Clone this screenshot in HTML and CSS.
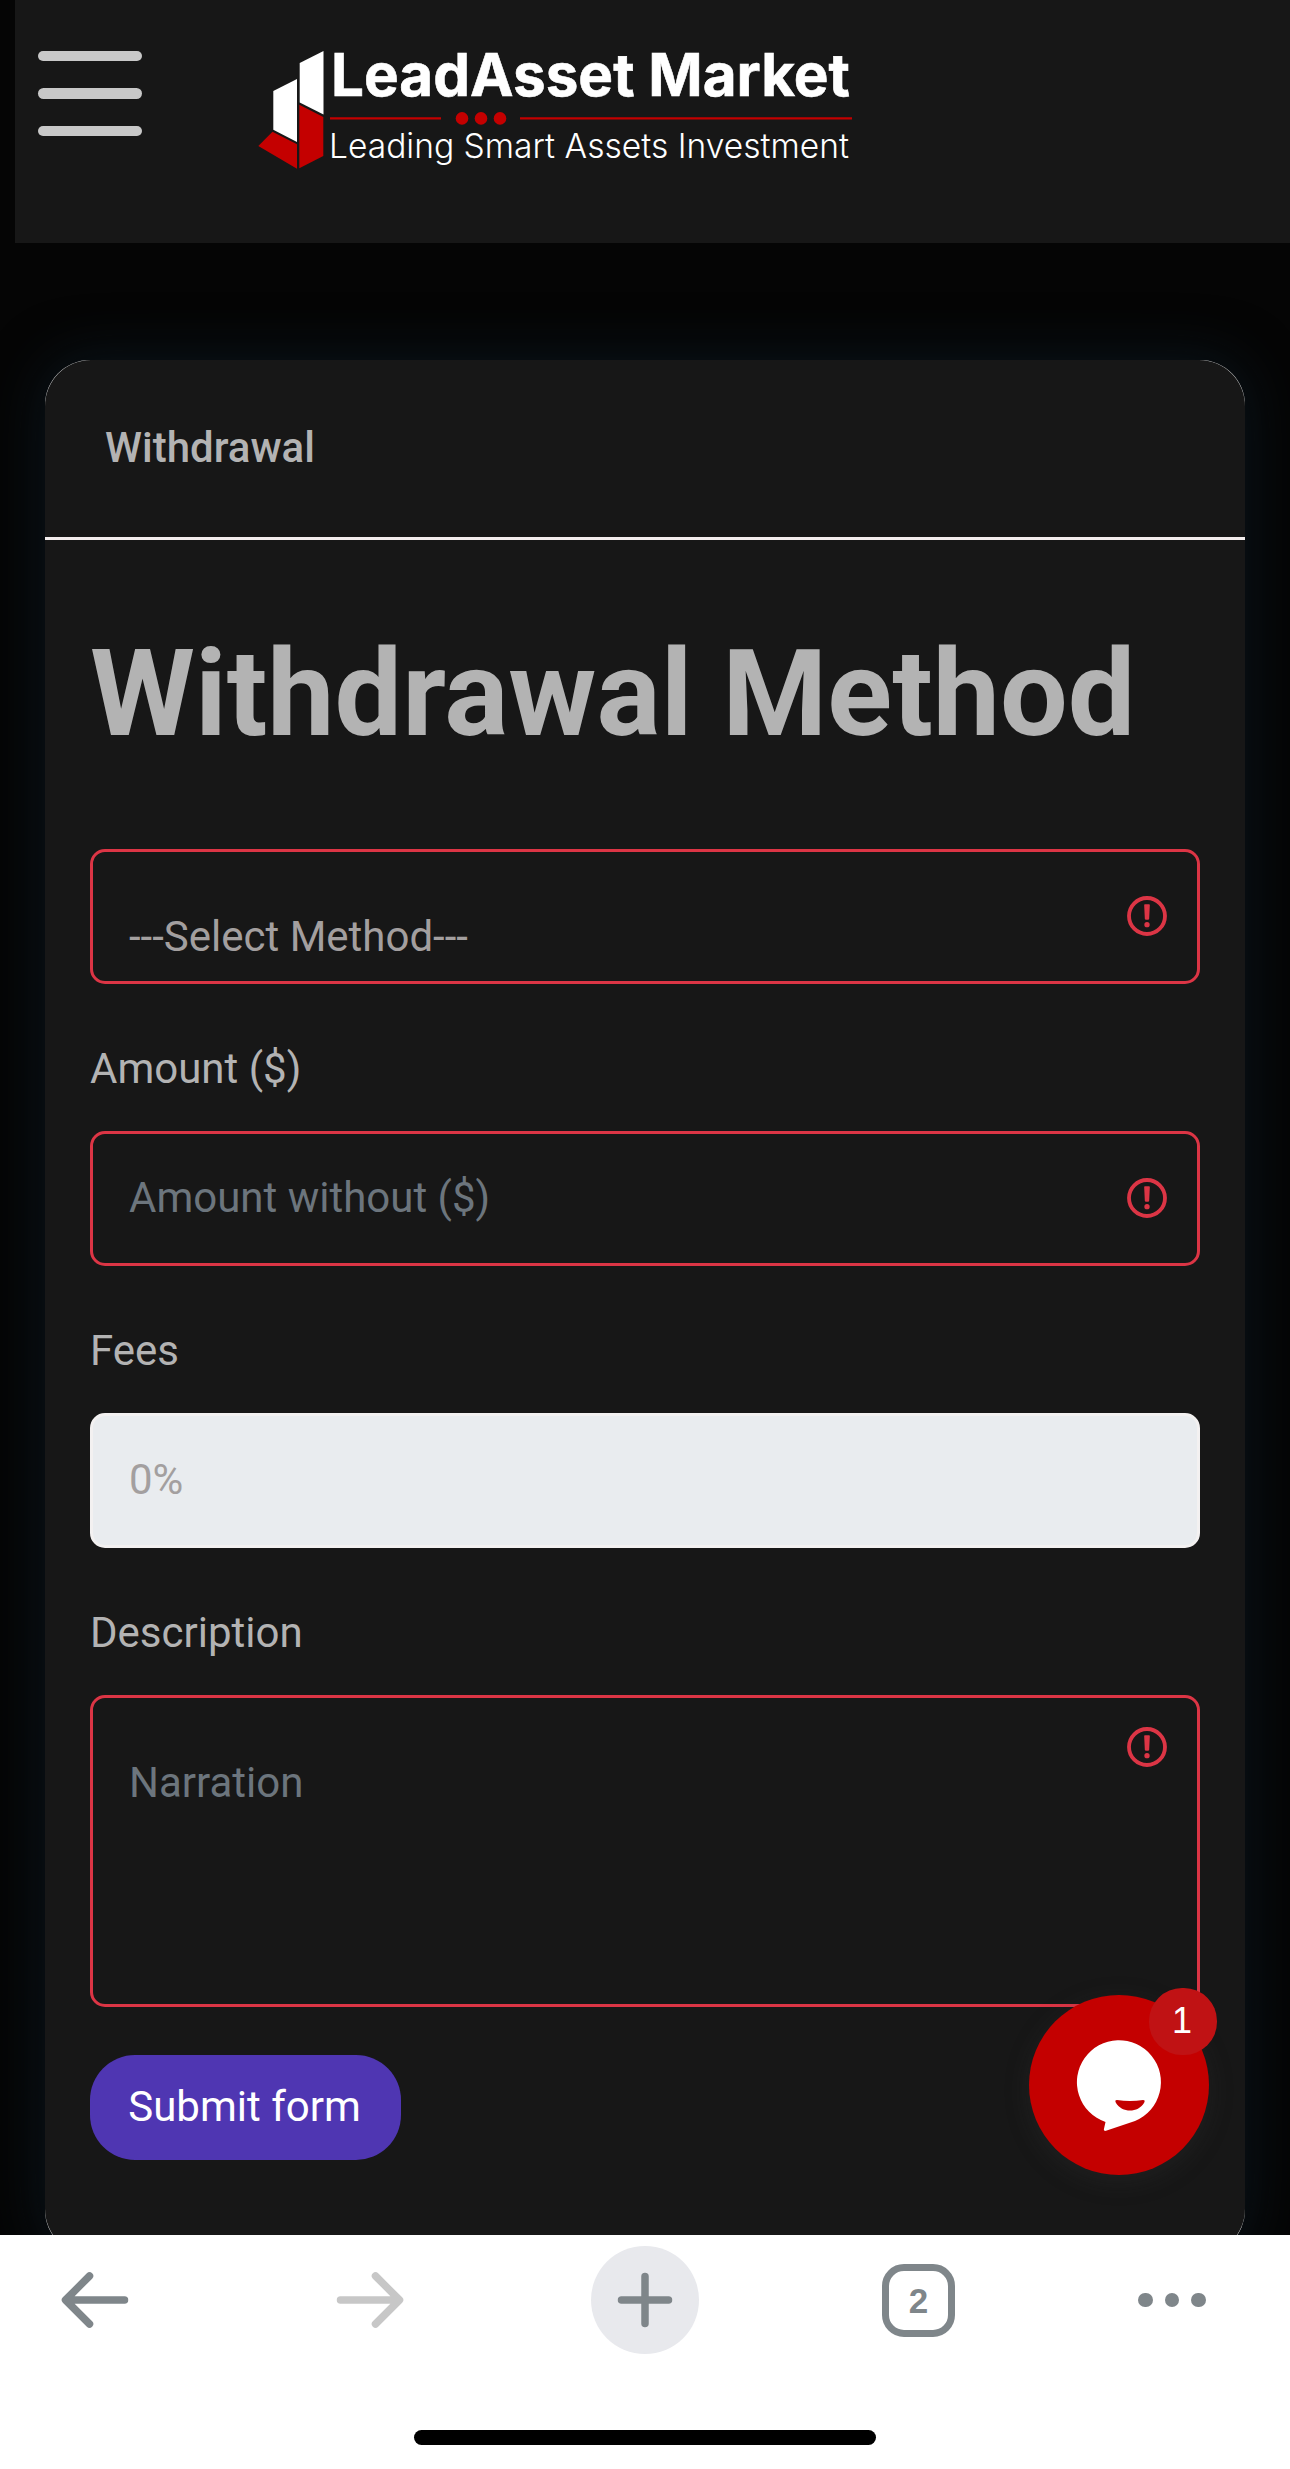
FILE: index.html
```
<!DOCTYPE html>
<html lang="en">

<head>
    <meta charset="UTF-8">
    <meta name="viewport" content="width=device-width, initial-scale=1.0">
    <title>Withdrawal</title>
    <link rel="stylesheet" href="styles.css">
</head>

<body>

    <div class="page">
        <header class="topbar">
            <button class="menu-btn" aria-label="Menu">
                <span></span>
                <span></span>
                <span></span>
            </button>
            <svg class="logo" viewBox="255 20 620 170" width="620" height="170">
                <polygon fill="#fff" points="299.7,63 323.5,51 323.5,114.5 299.7,102.5" />
                <polygon fill="#fff" points="273.3,91 297,79 297,142 273.3,129.7" />
                <polygon fill="#c40000" points="258.3,146 272.5,131.8 297,144.3 297,168.7" />
                <polygon fill="#c40000" points="299.3,104.7 323.3,117 323.3,156 299.3,168.3" />
                <text class="logo-name" x="331" y="96" textLength="519" lengthAdjust="spacingAndGlyphs">LeadAsset Market</text>
                <path stroke="#c40000" stroke-width="2.4" d="M330 118.4h111M520 118.4h332" />
                <circle fill="#c40000" cx="462" cy="118.4" r="6.3" />
                <circle fill="#c40000" cx="481" cy="118.4" r="6.3" />
                <circle fill="#c40000" cx="500" cy="118.4" r="6.3" />
                <text class="logo-tag" x="329" y="157.7" textLength="520" lengthAdjust="spacingAndGlyphs">Leading Smart Assets Investment</text>
            </svg>
        </header>

        <main class="card">
            <div class="card-header">Withdrawal</div>
            <form class="card-body">
                <h1>Withdrawal Method</h1>

                <div class="field">
                    <select class="control invalid">
                        <option>---Select Method---</option>
                    </select>
                    <svg class="alert" viewBox="0 0 12 12"><circle cx="6" cy="6" r="5.4" fill="none" stroke="#dc3545" stroke-width="1.15" /><path fill="#dc3545" stroke="#dc3545" stroke-width=".5" stroke-linejoin="round" d="M5.400 2.700h1.200L6.400 6.850h-.8z" /><circle cx="6" cy="8.6" r=".8" fill="#dc3545" /></svg>
                </div>

                <label for="amount">Amount ($)</label>
                <div class="field">
                    <input id="amount" class="control invalid" type="text" placeholder="Amount without ($)">
                    <svg class="alert" viewBox="0 0 12 12"><circle cx="6" cy="6" r="5.4" fill="none" stroke="#dc3545" stroke-width="1.15" /><path fill="#dc3545" stroke="#dc3545" stroke-width=".5" stroke-linejoin="round" d="M5.400 2.700h1.200L6.400 6.850h-.8z" /><circle cx="6" cy="8.6" r=".8" fill="#dc3545" /></svg>
                </div>

                <label for="fees">Fees</label>
                <div class="field">
                    <input id="fees" class="control readonly" type="text" value="0%" readonly>
                </div>

                <label for="description">Description</label>
                <div class="field">
                    <textarea id="description" class="control invalid" placeholder="Narration"></textarea>
                    <svg class="alert alert-top" viewBox="0 0 12 12"><circle cx="6" cy="6" r="5.4" fill="none" stroke="#dc3545" stroke-width="1.15" /><path fill="#dc3545" stroke="#dc3545" stroke-width=".5" stroke-linejoin="round" d="M5.400 2.700h1.200L6.400 6.850h-.8z" /><circle cx="6" cy="8.6" r=".8" fill="#dc3545" /></svg>
                </div>

                <button class="submit" type="button">Submit form</button>
            </form>
        </main>

        <!-- Chat widget -->
        <div class="chat">
            <svg viewBox="0 0 180 180" width="180" height="180">
                <path fill="#fff" d="M76.500 127A42 42 0 1 1 106 126L77 135.800c-1.500.4-2.500-.5-2-2z" />
                <path fill="#c40000" d="M88 105q13 2 26 0c2 0 2 1 1 3-6 10-22 10-28 0-1-2-1-3 1-3z" />
            </svg>
            <span class="chat-count">1</span>
        </div>
    </div>

    <!-- Browser toolbar -->
    <nav class="toolbar">
        <div class="toolbar-row">
            <svg class="back" width="68" height="56" viewBox="0 0 68 56"><path d="M63.500 28H5M28.500 4L4.500 28l24 24" /></svg>
            <svg class="forward" width="68" height="56" viewBox="0 0 68 56"><path d="M4.500 28H63M39.500 4l24 24-24 24" /></svg>
            <div class="new-tab">
                <svg width="56" height="56" viewBox="0 0 56 56"><path d="M28 4.500v47M4.500 28h47" /></svg>
            </div>
            <div class="tabs">2</div>
            <div class="more"><i></i><i></i><i></i></div>
        </div>
        <div class="home-bar"></div>
    </nav>

</body>

</html>
```
FILE: styles.css
```
* {
    box-sizing: border-box;
}

body {
    margin: 0;
    background: #050505;
    color: #b3b3b3;
    font-family: Roboto, sans-serif;
    font-size: 42px;
    line-height: 63px;
}

.page {
    position: relative;
    height: 2235px;
    overflow: hidden;
}

.topbar {
    display: flex;
    align-items: flex-start;
    height: 243px;
    margin-left: 15px;
    padding: 20px 0 0 23px;
    background: #171717;
}

.menu-btn {
    display: flex;
    flex-direction: column;
    gap: 27px;
    width: 104px;
    padding: 30.500px 0 0;
    border: 0;
    background: none;
}

.menu-btn span {
    height: 10.500px;
    border-radius: 6px;
    background: #c8c8c8;
}

.logo {
    margin-left: 113px;
    overflow: visible;
}

.logo-name {
    fill: #fff;
    font-family: Inter, sans-serif;
    font-weight: 700;
    font-size: 59px;
    line-height: 1;
    stroke: #fff;
    stroke-width: .6px;
}

.logo-tag {
    fill: #fff;
    font-family: Inter, sans-serif;
    font-weight: 300;
    font-size: 34.500px;
    line-height: 1;
}

.card {
    height: 1895px;
    margin: 117px 45px 0;
    border-radius: 45px;
    background: #ddd;
    box-shadow: 0 0 54px 3px #0a141b;
}

.card-header {
    height: 180px;
    padding: 56px 60px 0;
    border-bottom: 3px solid #f3eded;
    border-radius: 46px 46px 0 0;
    background: #171717;
    font-weight: 500;
}

.card-body {
    height: 1715px;
    padding: 82px 45px 0;
    border-radius: 0 0 46px 46px;
    background: #171717;
}

h1 {
    margin: 0 0 83px;
    font-size: 120px;
    font-weight: 700;
    line-height: 144px;
}

label {
    display: block;
    margin: 53px 0 31px;
}

.field {
    position: relative;
    display: flex;
}

.control {
    width: 100%;
    height: 135px;
    padding: 0 36px 2px;
    border: 3px solid #f3f1f1;
    border-radius: 15px;
    outline: none;
    appearance: none;
    background: #171717;
    color: #a39f9f;
    font: inherit;
}

.control::placeholder {
    color: #6c757d;
    opacity: 1;
}

.invalid {
    border-color: #dc3545;
}

.readonly {
    background: #e9ecef;
}

select.control {
    padding-top: 40px;
    padding-bottom: 0;
}

textarea.control {
    height: 312px;
    padding-top: 53px;
    resize: none;
}

.alert {
    position: absolute;
    top: 47px;
    right: 33px;
    width: 40px;
    height: 40px;
}

.alert-top {
    top: 32px;
}

.submit {
    display: block;
    width: 311px;
    height: 105px;
    margin-top: 48px;
    padding: 0 2px 2px 0;
    border: 0;
    border-radius: 45px;
    background: #4f36b2;
    color: #fff;
    font: inherit;
}

.chat {
    position: absolute;
    right: 81px;
    bottom: 60px;
    width: 180px;
    height: 180px;
    border-radius: 50%;
    background: #c40000;
    box-shadow: 0 6px 24px rgba(60, 60, 60, .25);
}

.chat-count {
    position: absolute;
    top: -7px;
    right: -8px;
    width: 68px;
    height: 67px;
    padding-right: 2px;
    border-radius: 33px;
    background: #c01214;
    color: #fff;
    font: 36px/66px "Liberation Sans", Arial, sans-serif;
    text-align: center;
}

.toolbar {
    height: 234px;
    padding-top: 11px;
    background: #fff;
}

.toolbar-row {
    display: flex;
    align-items: center;
    gap: 183px;
    height: 108px;
    padding-left: 61px;
}

.toolbar svg {
    fill: none;
    stroke: #7f868a;
    stroke-width: 7.500px;
    stroke-linecap: round;
    stroke-linejoin: round;
}

.toolbar .back {
    margin-right: 24px;
}

.toolbar .forward {
    margin-right: 4px;
    stroke: #c7c7c7;
}

.new-tab {
    display: flex;
    justify-content: center;
    align-items: center;
    width: 108px;
    height: 108px;
    border-radius: 50%;
    background: #e8e9ed;
}

.tabs {
    width: 73px;
    height: 73px;
    border: 7px solid #7f868a;
    border-radius: 22px;
    color: #7f868a;
    font: 700 35px/60px "Liberation Sans", Arial, sans-serif;
    text-align: center;
}

.more {
    display: flex;
    gap: 12px;
}

.more i {
    width: 14.500px;
    height: 14.500px;
    border-radius: 50%;
    background: #7f868a;
}

.home-bar {
    width: 462px;
    height: 15px;
    margin: 76px auto 0;
    border-radius: 8px;
    background: #000;
}
```
